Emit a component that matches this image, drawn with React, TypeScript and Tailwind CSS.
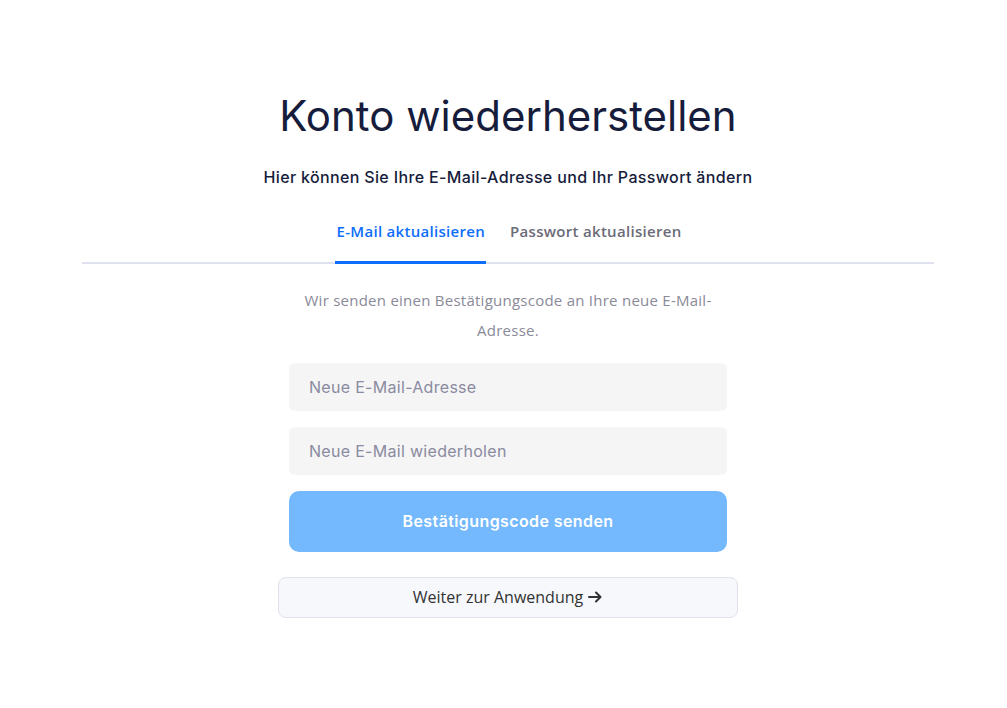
import React from "react";

export default function App() {
  const pop = "font-['Inter','Noto_Sans',sans-serif]";
  const nun = "font-['Open_Sans','Lato',sans-serif]";
  return (
    <div className="min-h-[708px] w-full bg-white">
      <div className="ml-[82px] w-[852px] pt-[88px] flex flex-col items-center">
        <h1 className={`${pop} text-[42px] leading-[56px] font-normal text-[#161c3b]`}>
          Konto wiederherstellen
        </h1>
        <p className={`${pop} mt-[22px] text-[16px] leading-[22px] font-medium tracking-[0.35px] text-[#161c3b]`}>
          Hier können Sie Ihre E-Mail-Adresse und Ihr Passwort ändern
        </p>
        <div className="mt-[24px] w-full border-b-2 border-[#e0e1ee] flex justify-center gap-[24px]">
          <div className={`${nun} -mb-[2px] pl-[2px] pr-[1px] pt-[8px] pb-[18px] border-b-[3px] border-[#0d6efd] text-[15px] font-semibold tracking-[0.3px] text-[#0d6efd]`}>
            E-Mail aktualisieren
          </div>
          <div className={`${nun} -mb-[2px] pt-[8px] pb-[18px] border-b-[3px] border-transparent text-[15px] font-semibold tracking-[0.3px] text-[#6b6b78]`}>
            Passwort aktualisieren
          </div>
        </div>
        <p className={`${nun} mt-[21px] w-[438px] text-center text-[15px] leading-[30px] tracking-[0.25px] text-[#8a8a99]`}>
          Wir senden einen Bestätigungscode an Ihre neue E-Mail-Adresse.
        </p>
        <div className="mt-[18px] w-[438px] flex flex-col gap-[16px]">
          <input
            placeholder="Neue E-Mail-Adresse"
            className={`${pop} h-[48px] w-full rounded-[6px] bg-[#f5f5f5] px-[20px] text-[16px] tracking-[0.3px] outline-none placeholder:text-[#8a8aa0]`}
          />
          <input
            placeholder="Neue E-Mail wiederholen"
            className={`${pop} h-[48px] w-full rounded-[6px] bg-[#f5f5f5] px-[20px] text-[16px] tracking-[0.3px] outline-none placeholder:text-[#8a8aa0]`}
          />
          <button
            className={`${pop} h-[61px] w-full rounded-[10px] bg-[#74b8fe] text-[16px] font-semibold tracking-[0.4px] text-white`}
          >
            Bestätigungscode senden
          </button>
        </div>
        <button
          className={`${nun} mt-[25px] h-[41px] w-[460px] rounded-[8px] border border-[#e0e1ee] bg-[#f7f8fc] text-[16px] text-[#333] flex items-center justify-center gap-[4px]`}
        >
          Weiter zur Anwendung
          <svg width="16" height="16" viewBox="0 0 16 16" fill="none" stroke="#333" strokeWidth="2" strokeLinecap="round" strokeLinejoin="round">
            <path d="M2 8h11M9 3.5L13.5 8 9 12.5" />
          </svg>
        </button>
      </div>
    </div>
  );
}
